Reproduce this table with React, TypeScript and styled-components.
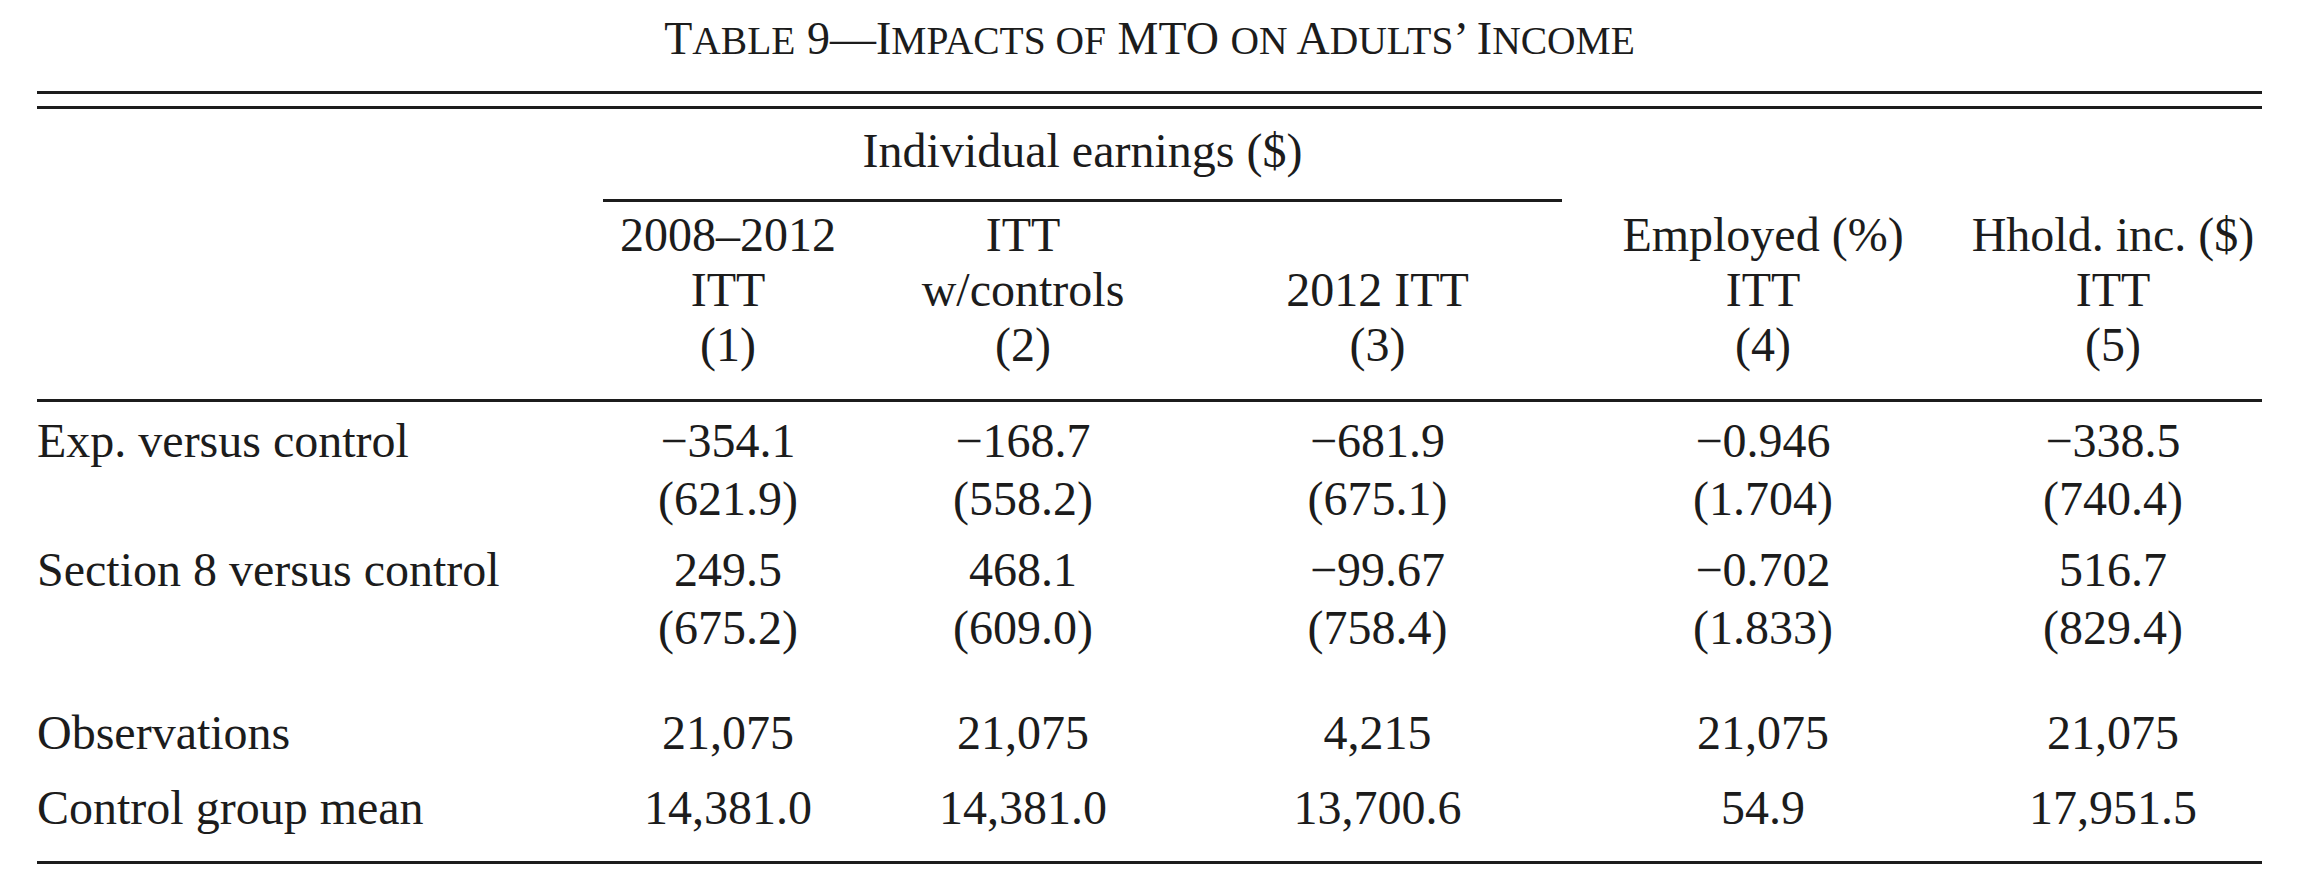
import React from "react";
import styled, { createGlobalStyle, css } from "styled-components";

const Global = createGlobalStyle`
  html, body { margin: 0; padding: 0; background: #ffffff; }
  body { width: 2306px; height: 882px; overflow: hidden; }
`;

const INK = "#1c1c1c";

const columns = css`
  display: grid;
  grid-template-columns: 566px 250px 340px 369px 402px 298px;
`;

const Sheet = styled.div`
  width: 2225px;
  margin-left: 37px;
  font-family: "Liberation Serif", "Times New Roman", serif;
  color: ${INK};
`;

const Caption = styled.div`
  padding-top: 14px;
  height: 50px;
  line-height: 50px;
  font-size: 46px;
  text-align: center;
  white-space: nowrap;
`;

const Sc = styled.span`
  font-size: 39.5px;
  text-transform: uppercase;
`;

const DoubleRule = styled.div`
  margin-top: 27px;
  height: 12px;
  border-top: 3px solid ${INK};
  border-bottom: 3px solid ${INK};
`;

const HeadGrid = styled.div`
  ${columns};
  font-size: 48px;
`;

const SpannerLabel = styled.div`
  grid-column: 2 / 5;
  grid-row: 1;
  padding-top: 14px;
  line-height: 55px;
  text-align: center;
  white-space: nowrap;
`;

const SpannerRule = styled.div`
  grid-column: 2 / 5;
  grid-row: 2;
  margin-top: 21px;
  height: 3px;
  background: ${INK};
`;

const ColHead = styled.div<{ $col: number }>`
  grid-column: ${(p) => p.$col};
  grid-row: 3;
  margin-top: 5px;
  height: 165px;
  display: flex;
  flex-direction: column;
  justify-content: flex-end;
  align-items: center;
  line-height: 55px;
  white-space: nowrap;
`;

const Rule = styled.div<{ $gap: number }>`
  margin-top: ${(p) => p.$gap}px;
  height: 3px;
  background: ${INK};
`;

const Row = styled.div<{ $pad: number }>`
  ${columns};
  padding-top: ${(p) => p.$pad}px;
  font-size: 48px;
  line-height: 58px;
`;

const Label = styled.div`
  text-align: left;
  white-space: nowrap;
`;

const Cell = styled.div`
  display: flex;
  flex-direction: column;
  align-items: center;
  white-space: nowrap;
`;

type Col = { head: string[]; num: string };

const cols: Col[] = [
  { head: ["2008–2012", "ITT"], num: "(1)" },
  { head: ["ITT", "w/controls"], num: "(2)" },
  { head: ["2012 ITT"], num: "(3)" },
  { head: ["Employed (%)", "ITT"], num: "(4)" },
  { head: ["Hhold. inc. ($)", "ITT"], num: "(5)" },
];

type BodyRow = { label: string; values: string[]; errors?: string[]; pad: number };

const rows: BodyRow[] = [
  {
    label: "Exp. versus control",
    values: ["−354.1", "−168.7", "−681.9", "−0.946", "−338.5"],
    errors: ["(621.9)", "(558.2)", "(675.1)", "(1.704)", "(740.4)"],
    pad: 10,
  },
  {
    label: "Section 8 versus control",
    values: ["249.5", "468.1", "−99.67", "−0.702", "516.7"],
    errors: ["(675.2)", "(609.0)", "(758.4)", "(1.833)", "(829.4)"],
    pad: 13,
  },
  {
    label: "Observations",
    values: ["21,075", "21,075", "4,215", "21,075", "21,075"],
    pad: 47,
  },
  {
    label: "Control group mean",
    values: ["14,381.0", "14,381.0", "13,700.6", "54.9", "17,951.5"],
    pad: 17,
  },
];

export default function App() {
  return (
    <>
      <Global />
      <Sheet>
        <Caption>
          T<Sc>able</Sc> 9—I<Sc>mpacts of</Sc> MTO <Sc>on</Sc> A<Sc>dults</Sc>’ I<Sc>ncome</Sc>
        </Caption>
        <DoubleRule />
        <HeadGrid>
          <SpannerLabel>Individual earnings ($)</SpannerLabel>
          <SpannerRule />
          {cols.map((c, i) => (
            <ColHead key={c.num} $col={i + 2}>
              {c.head.map((h) => (
                <span key={h}>{h}</span>
              ))}
              <span>{c.num}</span>
            </ColHead>
          ))}
        </HeadGrid>
        <Rule $gap={27} />
        {rows.map((r) => (
          <Row key={r.label} $pad={r.pad}>
            <Label>{r.label}</Label>
            {r.values.map((v, i) => (
              <Cell key={i}>
                <span>{v}</span>
                {r.errors && <span>{r.errors[i]}</span>}
              </Cell>
            ))}
          </Row>
        ))}
        <Rule $gap={24} />
      </Sheet>
    </>
  );
}
